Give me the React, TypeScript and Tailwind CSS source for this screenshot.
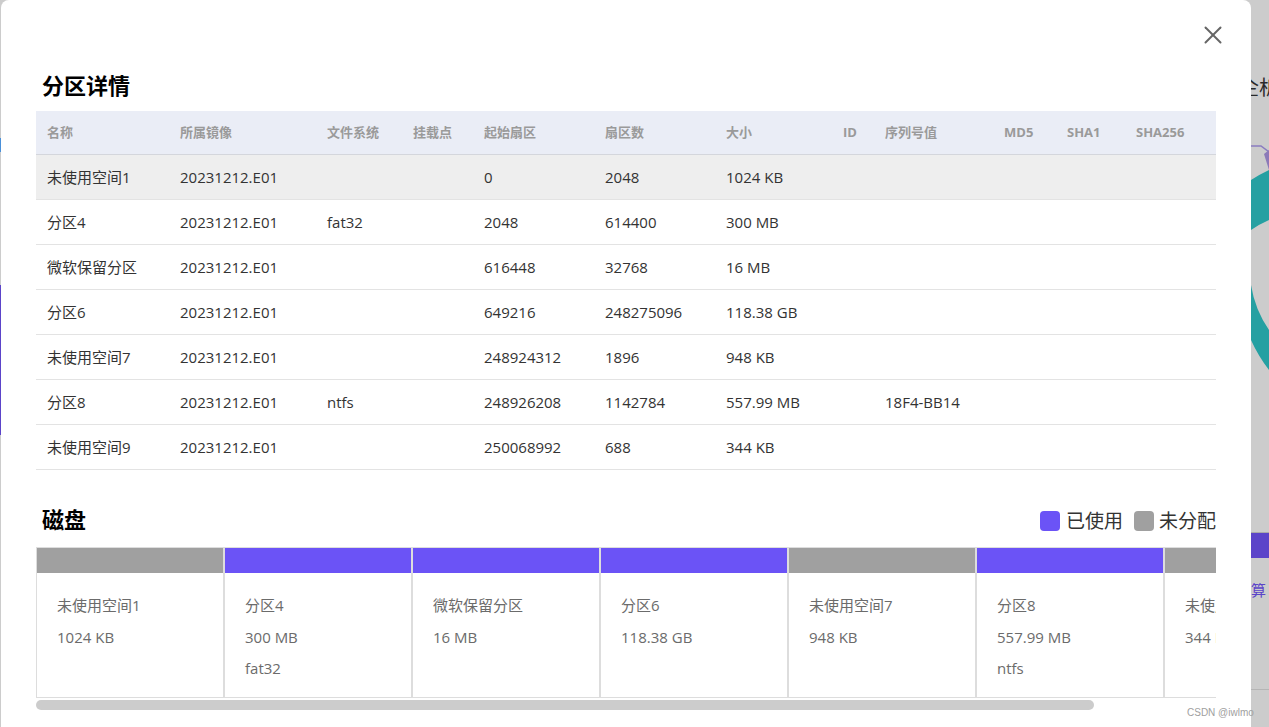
import { X } from 'lucide-react';

interface Partition {
  name: string;
  image: string;
  fs: string;
  mount: string;
  start: string;
  sectors: string;
  size: string;
  id: string;
  serial: string;
  md5: string;
  sha1: string;
  sha256: string;
  used: boolean;
}

const partitions: Partition[] = [
  { name: '未使用空间1', image: '20231212.E01', fs: '', mount: '', start: '0', sectors: '2048', size: '1024 KB', id: '', serial: '', md5: '', sha1: '', sha256: '', used: false },
  { name: '分区4', image: '20231212.E01', fs: 'fat32', mount: '', start: '2048', sectors: '614400', size: '300 MB', id: '', serial: '', md5: '', sha1: '', sha256: '', used: true },
  { name: '微软保留分区', image: '20231212.E01', fs: '', mount: '', start: '616448', sectors: '32768', size: '16 MB', id: '', serial: '', md5: '', sha1: '', sha256: '', used: true },
  { name: '分区6', image: '20231212.E01', fs: '', mount: '', start: '649216', sectors: '248275096', size: '118.38 GB', id: '', serial: '', md5: '', sha1: '', sha256: '', used: true },
  { name: '未使用空间7', image: '20231212.E01', fs: '', mount: '', start: '248924312', sectors: '1896', size: '948 KB', id: '', serial: '', md5: '', sha1: '', sha256: '', used: false },
  { name: '分区8', image: '20231212.E01', fs: 'ntfs', mount: '', start: '248926208', sectors: '1142784', size: '557.99 MB', id: '', serial: '18F4-BB14', md5: '', sha1: '', sha256: '', used: true },
  { name: '未使用空间9', image: '20231212.E01', fs: '', mount: '', start: '250068992', sectors: '688', size: '344 KB', id: '', serial: '', md5: '', sha1: '', sha256: '', used: false },
];

const columns: { key: keyof Partition; label: string; width: string }[] = [
  { key: 'name', label: '名称', width: 'w-[133px]' },
  { key: 'image', label: '所属镜像', width: 'w-[147px]' },
  { key: 'fs', label: '文件系统', width: 'w-[86px]' },
  { key: 'mount', label: '挂载点', width: 'w-[71px]' },
  { key: 'start', label: '起始扇区', width: 'w-[121px]' },
  { key: 'sectors', label: '扇区数', width: 'w-[121px]' },
  { key: 'size', label: '大小', width: 'w-[117px]' },
  { key: 'id', label: 'ID', width: 'w-[42px]' },
  { key: 'serial', label: '序列号值', width: 'w-[119px]' },
  { key: 'md5', label: 'MD5', width: 'w-[63px]' },
  { key: 'sha1', label: 'SHA1', width: 'w-[69px]' },
  { key: 'sha256', label: 'SHA256', width: 'w-[91px]' },
];

const font = { fontFamily: '"Open Sans", "Noto Sans CJK SC", sans-serif' };

const Backdrop = () => (
  <>
    {/* page content behind the overlay, right side */}
    <div className="absolute left-[1239px] top-[74px] text-[20px] leading-[28px] text-[#2a2a2a] whitespace-nowrap">企析</div>
    <svg className="absolute left-[1251px] top-[130px]" width="18" height="250" viewBox="0 0 18 250">
      <polyline points="0,16 10,16 18,22" fill="none" stroke="#8a7cc0" strokeWidth="1.5" />
      <path d="M18 20 L13 24 L18 40 Z" fill="#8c7ab8" />
      <path d="M18 40 A150 150 0 0 0 0 50 L0 100 A110 110 0 0 1 18 90 Z" fill="#25a0a2" />
      <path d="M0 155 A110 110 0 0 0 18 200 L18 240 A150 150 0 0 1 0 210 Z" fill="#25a0a2" />
    </svg>
    <div className="absolute left-[1251px] top-[532px] w-[18px] h-[1px] bg-[#aaaaaa]" />
    <div className="absolute left-[1251px] top-[533px] w-[18px] h-[25px] bg-[#5b44c9]" />
    <div className="absolute left-[1251px] top-[580px] text-[15px] leading-[20px] text-[#5b44c9] whitespace-nowrap">算Ⅰ</div>
    <div className="absolute left-[1251px] top-[689px] w-[18px] h-[1px] bg-[#b5b5b5]" />
    {/* left side */}
    <div className="absolute left-0 top-[285px] w-[2px] h-[150px] bg-[#5b44c9]" />
    <div className="absolute left-0 top-[138px] w-[2px] h-[14px] bg-[#4a90d9]" />
  </>
);

const DiskBlock = ({ p }: { p: Partition }) => (
  <div className="w-[188px] shrink-0 border-r-2 border-[#dddddd] flex flex-col">
    <div className={`h-[25px] ${p.used ? 'bg-[#6b53f6]' : 'bg-[#a0a0a0]'}`} />
    <div className="flex-1 pl-[20px] pt-[17px] text-[15px] leading-[31.5px] text-[#6b6b6b] whitespace-nowrap">
      <div>{p.name}</div>
      <div>{p.size}</div>
      {p.fs && <div>{p.fs}</div>}
    </div>
  </div>
);

export default function App() {
  return (
    <div className="relative w-[1269px] h-[727px] overflow-hidden bg-[#cccccc]" style={font}>
      <Backdrop />

      <div className="absolute left-[1px] top-0 w-[1250px] h-[760px] bg-white rounded-t-[8px] px-[35px] pt-[70px]">
        <button className="absolute top-[20px] right-[23px] text-[#666666]">
          <X size={30} strokeWidth={1.6} />
        </button>

        <h2 className="ml-[6px] text-[22px] leading-[30px] font-bold text-black">分区详情</h2>

        <div className="mt-[11px]">
          <div className="flex h-[44px] bg-[#eaedf6] border-b border-[#d4d6dc]">
            {columns.map((c) => (
              <div key={c.key} className={`${c.width} shrink-0 pl-[11px] flex items-center text-[13px] font-bold text-[#9a9a9a]`}>
                {c.label}
              </div>
            ))}
          </div>
          {partitions.map((p, i) => (
            <div key={p.name} className={`flex h-[45px] border-b border-[#e3e3e3] ${i === 0 ? 'bg-[#eeeeee]' : 'bg-white'}`}>
              {columns.map((c) => (
                <div key={c.key} className={`${c.width} shrink-0 pl-[11px] flex items-center text-[15px] text-[#333333] whitespace-nowrap`}>
                  {p[c.key] as string}
                </div>
              ))}
            </div>
          ))}
        </div>

        <div className="mt-[34px] flex items-center justify-between h-[30px]">
          <h2 className="ml-[6px] text-[22px] leading-[30px] font-bold text-black">磁盘</h2>
          <div className="flex items-center text-[19px] text-[#333333] mt-[4px]">
            <span className="w-[20px] h-[20px] rounded-[4px] bg-[#6b53f6] mr-[6px]" />
            <span>已使用</span>
            <span className="w-[20px] h-[20px] rounded-[4px] bg-[#a0a0a0] ml-[11px] mr-[5px]" />
            <span>未分配</span>
          </div>
        </div>

        <div className="mt-[13px] w-[1180px] overflow-hidden">
          <div className="flex h-[151px] border border-[#dddddd] w-max">
            {partitions.map((p) => (
              <DiskBlock key={p.name} p={p} />
            ))}
          </div>
          <div className="h-[12px] pt-[2px]">
            <div className="w-[1058px] h-[10px] rounded-full bg-[#cccccc]" />
          </div>
        </div>
      </div>

      <div className="absolute left-[1187px] top-[706px] text-[10px] leading-[14px] text-[#a0a0a0] whitespace-nowrap" style={{ fontFamily: '"Liberation Sans", sans-serif' }}>
        CSDN @iwlmo
      </div>
    </div>
  );
}
